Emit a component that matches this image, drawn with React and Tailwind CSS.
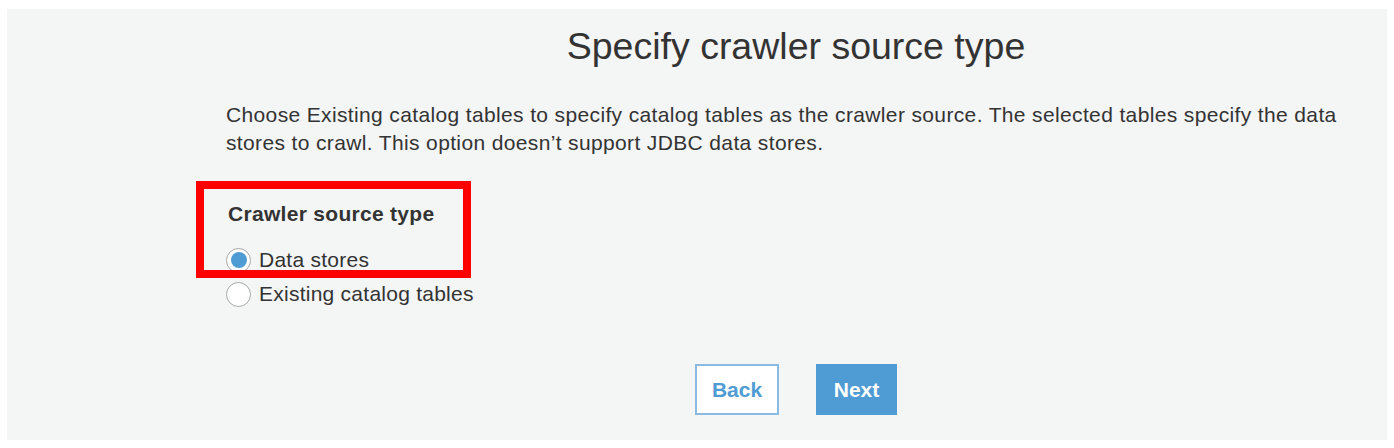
export default function App() {
  return (
    <div
      className="w-[1394px] h-[448px] bg-white pt-[9px] pl-[7px]"
      style={{ fontFamily: '"Liberation Sans", Arial, sans-serif' }}
    >
      <div className="w-[1380px] h-[431px] bg-[#f4f5f5] text-[#333]">
        <div className="ml-[219px] w-[1140px]">
          <h1 className="pt-[15px] text-center text-[37.5px] leading-[44px] text-[#333]">
            Specify crawler source type
          </h1>

          <p className="mt-[33px] text-[21px] tracking-[0.36px] leading-[28px]">
            Choose Existing catalog tables to specify catalog tables as the crawler source. The selected tables specify the data
            <br />
            stores to crawl. This option doesn’t support JDBC data stores.
          </p>

          <div className="mt-[27px] relative">
            {/* highlight drawn over the field */}
            <div className="absolute left-[-30px] top-[-3px] w-[275px] h-[97px] border-[8px] border-[#ff0000]" />
            <div className="pt-[18px] pl-[2px] font-bold text-[21px] tracking-[0.3px] leading-[24px]">
              Crawler source type
            </div>
            <div className="mt-[17px] flex flex-col">
              <label className="flex items-center gap-[8px] h-[34px] text-[21px] tracking-[0.25px]">
                <span className="w-[25px] h-[25px] rounded-full border-[1.5px] border-[#a8a8a8] bg-white flex items-center justify-center">
                  <span className="w-[16px] h-[16px] rounded-full bg-[#4f9bd4]" />
                </span>
                Data stores
              </label>
              <label className="flex items-center gap-[8px] h-[34px] text-[21px] tracking-[0.25px]">
                <span className="w-[25px] h-[25px] rounded-full border-[1.5px] border-[#a8a8a8] bg-white" />
                Existing catalog tables
              </label>
            </div>
          </div>

          <div className="mt-[53px] flex justify-center gap-[37px]">
            <button className="w-[84px] h-[51px] bg-white border-2 border-[#8ab9e2] text-[#4f9bd4] font-bold text-[21px]">
              Back
            </button>
            <button className="w-[81px] h-[51px] bg-[#4f9bd4] text-white font-bold text-[21px]">
              Next
            </button>
          </div>
        </div>
      </div>
    </div>
  );
}
